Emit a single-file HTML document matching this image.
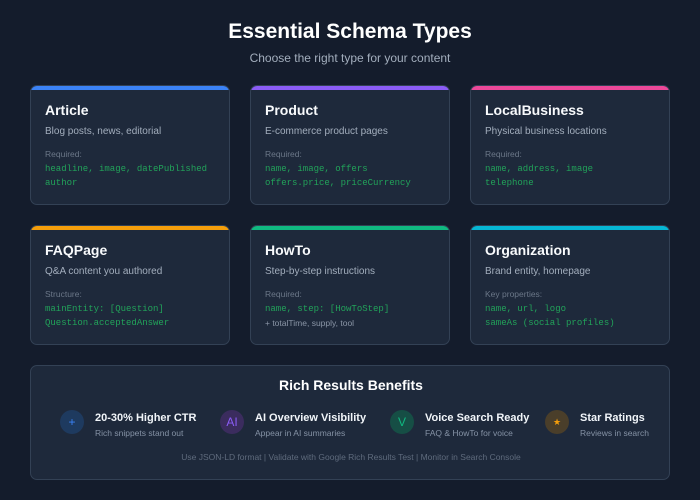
<!DOCTYPE html>
<html><head><style>
*{margin:0;padding:0;box-sizing:border-box}
body{width:700px;height:500px;background:#141c2c;font-family:"Liberation Sans","DejaVu Sans",sans-serif;position:relative;overflow:hidden;color:#f1f5f9}
.abs{position:absolute}
.card{position:absolute;width:200px;height:120px;background:#1e293b;border:1px solid #334155;border-radius:7px;overflow:hidden}
.bar{position:absolute;left:0;top:0;right:0;height:4px}
.t{position:absolute;left:14px;top:16px;font-size:14px;font-weight:bold;color:#f8fafc}
.d{position:absolute;left:14px;top:40px;font-size:10px;color:#a3aebd}
.l{position:absolute;left:14px;top:63px;font-size:8.5px;color:#6b7788}
.c{position:absolute;left:14px;font-family:"Liberation Mono",monospace;font-size:9px;color:#22a35a}
.c1{top:78px}.c2{top:92px}
.p{position:absolute;left:14px;top:92px;font-size:8.5px;color:#8a95a6}
.ic{position:absolute;width:24px;height:24px;border-radius:50%;text-align:center;line-height:24px;font-size:12px}
.bt{position:absolute;font-size:11px;font-weight:bold;color:#f1f5f9}
.bs{position:absolute;font-size:8.5px;color:#8592a5}
</style></head><body>
<div class="abs" style="left:0;width:700px;top:20px;text-align:center;font-size:21px;font-weight:bold;color:#fff">Essential Schema Types</div>
<div class="abs" style="left:0;width:700px;top:51px;text-align:center;font-size:12px;color:#a3aebd">Choose the right type for your content</div>

<div class="card" style="left:30px;top:85px"><div class="bar" style="background:#3b82f6"></div><div class="t">Article</div><div class="d">Blog posts, news, editorial</div><div class="l">Required:</div><div class="c c1">headline, image, datePublished</div><div class="c c2">author</div></div>
<div class="card" style="left:250px;top:85px"><div class="bar" style="background:#8b5cf6"></div><div class="t">Product</div><div class="d">E-commerce product pages</div><div class="l">Required:</div><div class="c c1">name, image, offers</div><div class="c c2">offers.price, priceCurrency</div></div>
<div class="card" style="left:470px;top:85px"><div class="bar" style="background:#ec4899"></div><div class="t">LocalBusiness</div><div class="d">Physical business locations</div><div class="l">Required:</div><div class="c c1">name, address, image</div><div class="c c2">telephone</div></div>

<div class="card" style="left:30px;top:225px"><div class="bar" style="background:#f59e0b"></div><div class="t">FAQPage</div><div class="d">Q&amp;A content you authored</div><div class="l">Structure:</div><div class="c c1">mainEntity: [Question]</div><div class="c c2">Question.acceptedAnswer</div></div>
<div class="card" style="left:250px;top:225px"><div class="bar" style="background:#10b981"></div><div class="t">HowTo</div><div class="d">Step-by-step instructions</div><div class="l">Required:</div><div class="c c1">name, step: [HowToStep]</div><div class="p">+ totalTime, supply, tool</div></div>
<div class="card" style="left:470px;top:225px"><div class="bar" style="background:#06b6d4"></div><div class="t">Organization</div><div class="d">Brand entity, homepage</div><div class="l">Key properties:</div><div class="c c1">name, url, logo</div><div class="c c2">sameAs (social profiles)</div></div>

<div class="abs" style="left:30px;top:365px;width:640px;height:115px;background:#1e293b;border:1px solid #334155;border-radius:7px">
<div class="abs" style="left:0;width:640px;top:11px;text-align:center;font-size:14px;font-weight:bold;color:#fff">Rich Results Benefits</div>
<div class="ic" style="left:29px;top:44px;background:#1e3a5f;color:#3b82f6">+</div>
<div class="bt" style="left:64px;top:46px">20-30% Higher CTR</div><div class="bs" style="left:64px;top:62px">Rich snippets stand out</div>
<div class="ic" style="left:189px;top:44px;background:#3b2c5e;color:#8b5cf6">AI</div>
<div class="bt" style="left:224px;top:46px">AI Overview Visibility</div><div class="bs" style="left:224px;top:62px">Appear in AI summaries</div>
<div class="ic" style="left:359px;top:44px;background:#164e45;color:#10b981">V</div>
<div class="bt" style="left:394px;top:46px">Voice Search Ready</div><div class="bs" style="left:394px;top:62px">FAQ &amp; HowTo for voice</div>
<div class="ic" style="left:514px;top:44px;background:#4a3e2a;color:#f59e0b;font-size:9px">★</div>
<div class="bt" style="left:549px;top:46px">Star Ratings</div><div class="bs" style="left:549px;top:62px">Reviews in search</div>
<div class="abs" style="left:0;width:640px;top:86px;text-align:center;font-size:8.5px;color:#5f6b7d">Use JSON-LD format | Validate with Google Rich Results Test | Monitor in Search Console</div>
</div>
</body></html>
